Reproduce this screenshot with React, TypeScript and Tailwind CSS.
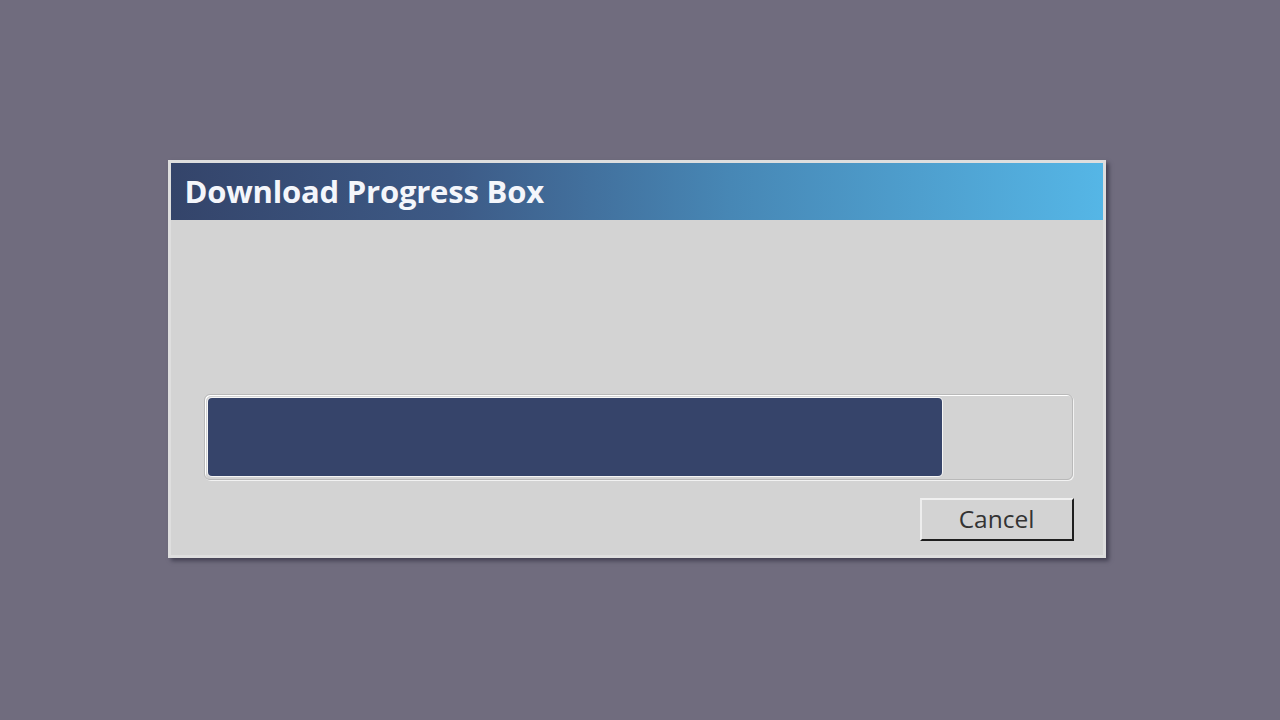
export default function App() {
  const progress = 85.3;

  return (
    <div className="h-screen w-full bg-[#706c7e] flex items-center justify-center pr-[7px] pb-[2px]">
      <div className="w-[938px] bg-[#d3d3d3] border-[3px] border-[#dedede] shadow-[3px_3px_4px_rgba(40,38,55,0.6)]">
        <div className="h-[57px] flex items-center px-[14px] bg-[linear-gradient(90deg,#34446a_0%,#3d5a86_30%,#4787b5_60%,#55b6e6_100%)]">
          <h1 className="text-[31px] font-bold text-[#f4f6fb] font-['Open_Sans',sans-serif] tracking-[-0.2px]">
            Download Progress Box
          </h1>
        </div>

        <div className="pl-[33px] pr-[30px] pt-[174px] pb-[14px]">
          <div className="h-[86px] rounded-[6px] border border-[#b9b9b9] shadow-[inset_1px_1px_0_#ffffff,1px_1px_0_#f2f2f2] p-[3px]">
            <div
              className="h-full bg-[#36446a] rounded-[4px] shadow-[0_0_0_1px_#f5f5f5]"
              style={{ width: `${progress}%` }}
            />
          </div>

          <div className="flex justify-end mt-[18px] -mr-[1px]">
            <button className="w-[154px] h-[43px] bg-[#d3d3d3] border-2 border-t-[#f0f0f0] border-l-[#ededed] border-r-[#1e1e1e] border-b-[#1e1e1e] text-[24.5px] text-[#333333] font-['Open_Sans',sans-serif] leading-none">
              Cancel
            </button>
          </div>
        </div>
      </div>
    </div>
  );
}
